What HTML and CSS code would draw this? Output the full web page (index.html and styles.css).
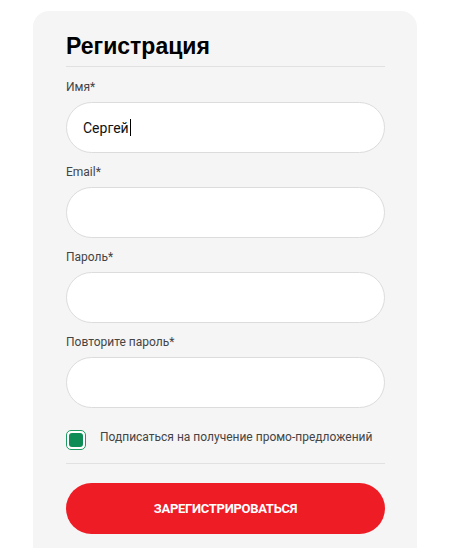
FILE: index.html
```html
<!DOCTYPE html>
<html lang="ru">
<head>
<meta charset="utf-8">
<title>Регистрация</title>
<link rel="stylesheet" href="styles.css">
</head>
<body>
<div class="card">
  <h1 class="title">Регистрация</h1>
  <form class="form">
    <div class="field">
      <label class="label">Имя*</label>
      <div class="input"><span class="value">Сергей</span><span class="caret"></span></div>
    </div>
    <div class="field">
      <label class="label">Email*</label>
      <div class="input"></div>
    </div>
    <div class="field">
      <label class="label">Пароль*</label>
      <div class="input"></div>
    </div>
    <div class="field">
      <label class="label">Повторите пароль*</label>
      <div class="input"></div>
    </div>
    <div class="check-row">
      <span class="checkbox"><span class="checkbox-fill"></span></span>
      <span class="check-text">Подписаться на получение промо-предложений</span>
    </div>
    <button class="submit" type="button">Зарегистрироваться</button>
  </form>
</div>
</body>
</html>
```
FILE: styles.css
```css
* { box-sizing: border-box; }
html, body { margin: 0; padding: 0; background: #fff; }
body { font-family: Roboto, "Liberation Sans", Arial, sans-serif; color: #333; }

.card {
  margin: 11px 0 0 33px;
  width: 384px;
  min-height: 560px;
  background: #f5f5f5;
  border-radius: 16px 16px 0 0;
  padding: 22px 32px 0 33px;
}

.title {
  margin: 0;
  font-family: "Liberation Sans", Arial, sans-serif;
  font-size: 23px;
  line-height: 26px;
  font-weight: 700;
  color: #000;
  padding-bottom: 7px;
  border-bottom: 1px solid #e1e1e1;
}

.form { display: flex; flex-direction: column; padding-top: 13px; }

.field { display: flex; flex-direction: column; margin-bottom: 12px; }

.label {
  font-size: 12px;
  line-height: 14px;
  color: #444;
  margin-bottom: 8px;
}

.input {
  height: 51px;
  background: #fff;
  border: 1px solid #dcdcdc;
  border-radius: 26px;
  display: flex;
  align-items: center;
  padding-left: 16px;
  font-size: 14px;
  color: #111;
}

.caret { display: inline-block; width: 1px; height: 17px; background: #000; margin-left: 1px; }

.check-row {
  display: flex;
  align-items: flex-start;
  margin-top: 10px;
  padding-bottom: 13px;
  border-bottom: 1px solid #e1e1e1;
}

.checkbox {
  width: 20px; height: 20px;
  border: 1px solid #1d9a62;
  border-radius: 5px;
  background: #fff;
  padding: 2px;
  display: flex;
  flex-shrink: 0;
}
.checkbox-fill { flex: 1; background: #0e8c55; border-radius: 3px; }

.check-text {
  margin-left: 14px;
  font-size: 12px;
  line-height: 14px;
  color: #444;
}

.submit {
  margin-top: 19px;
  height: 51px;
  border: 0;
  border-radius: 26px;
  background: #ee1c25;
  color: #fff;
  font-family: Roboto, "Liberation Sans", Arial, sans-serif;
  font-weight: 700;
  font-size: 13px;
  text-transform: uppercase;
  letter-spacing: -0.3px;
}
```
